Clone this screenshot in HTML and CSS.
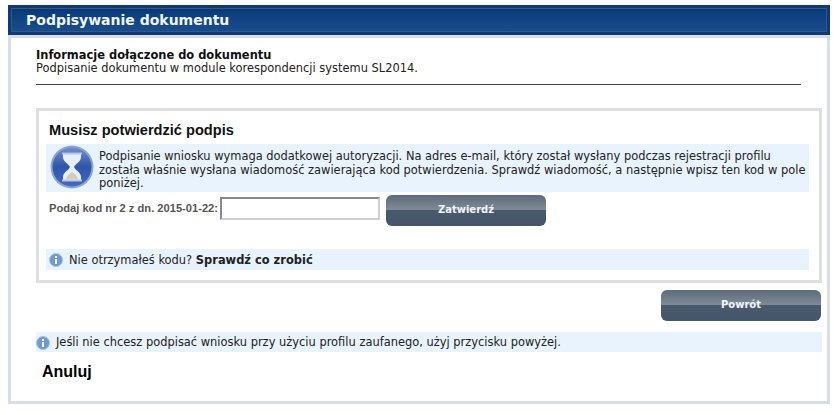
FILE: index.html
```html
<!DOCTYPE html>
<html lang="pl">
<head>
  <meta charset="UTF-8" />
  <title>Podpisywanie dokumentu</title>
  <link rel="stylesheet" href="styles.css">
</head>
<body>
  <header class="naglowek">
    <h1>Podpisywanie dokumentu</h1>
  </header>
  <main class="panel">
    <section class="informacje">
      <h2>Informacje dołączone do dokumentu</h2>
      <p>Podpisanie dokumentu w module korespondencji systemu SL2014.</p>
    </section>

    <section class="potwierdzenie">
      <h3>Musisz potwierdzić podpis</h3>
      <div class="komunikat">
        <svg class="klepsydra" viewBox="0 0 44 44" aria-hidden="true">
          <defs>
            <linearGradient id="tlo" x1="0" y1="0" x2="0" y2="1">
              <stop offset="0" stop-color="#6f8fd0"/>
              <stop offset="0.5" stop-color="#2f55a8"/>
              <stop offset="1" stop-color="#3f6cc0"/>
            </linearGradient>
          </defs>
          <circle cx="22" cy="22" r="21.5" fill="#8fa5cf"/>
          <circle cx="22" cy="22" r="19.5" fill="url(#tlo)"/>
          <path d="M13 9h18v3c0 5-6 7-7 10 1 3 7 5 7 10v3H13v-3c0-5 6-7 7-10-1-3-7-5-7-10z" fill="#e8eef8"/>
          <path d="M16 34c1-4 4-6 6-7 2 1 5 3 6 7z" fill="#d6cdb8"/>
          <path d="M12 8.500h20M12 35.500h20" stroke="#b9c6de" stroke-width="2"/>
        </svg>
        <p>Podpisanie wniosku wymaga dodatkowej autoryzacji. Na adres e-mail, który został wysłany podczas rejestracji profilu została właśnie wysłana wiadomość zawierająca kod potwierdzenia. Sprawdź wiadomość, a następnie wpisz ten kod w pole poniżej.</p>
      </div>
      <form class="kod">
        <label for="kod">Podaj kod nr 2 z dn. 2015-01-22:</label>
        <input type="text" id="kod">
        <button type="button" class="przycisk">Zatwierdź</button>
      </form>
      <div class="pomoc">
        <svg class="ikona-info" viewBox="0 0 14 14" aria-hidden="true">
          <circle cx="7" cy="7" r="6.500" fill="#6f9ad0" stroke="#a9c0dc"/>
          <rect x="6" y="6" width="2" height="5" fill="#fff"/>
          <rect x="6" y="3" width="2" height="2" fill="#fff"/>
        </svg>
        <p>Nie otrzymałeś kodu? <strong>Sprawdź co zrobić</strong></p>
      </div>
    </section>

    <div class="akcje">
      <button type="button" class="przycisk">Powrót</button>
    </div>

    <div class="pomoc pomoc-dolna">
      <svg class="ikona-info" viewBox="0 0 14 14" aria-hidden="true">
        <circle cx="7" cy="7" r="6.500" fill="#6f9ad0" stroke="#a9c0dc"/>
        <rect x="6" y="6" width="2" height="5" fill="#fff"/>
        <rect x="6" y="3" width="2" height="2" fill="#fff"/>
      </svg>
      <p>Jeśli nie chcesz podpisać wniosku przy użyciu profilu zaufanego, użyj przycisku powyżej.</p>
    </div>

    <a class="anuluj" href="#">Anuluj</a>
  </main>
</body>
</html>
```

FILE: styles.css
```css
:root {
  --ramka: #d9dee6;
  --ramka-jasna: #dfdfdf;
  --blekit: #e9f3fd;
  --tekst: #222;
}

* {
  box-sizing: border-box;
  margin: 0;
  padding: 0;
}

body {
  background-color: #fff;
  color: var(--tekst);
  font-family: "DejaVu Sans", Verdana, sans-serif;
  font-size: 11.450px;
  line-height: 13px;
  padding: 5px 4px 0 8px;
}

.naglowek {
  height: 30px;
  padding: 7px 18px 0;
  background: linear-gradient(#0d2f5e, #0c3f80 30%, #1f4f8c);
  box-shadow: inset 0 0 0 3px #123a70, inset 0 0 0 4px #2b5a94;
}

.naglowek h1 {
  color: #f2f6fb;
  font-size: 14px;
  line-height: 16px;
  font-weight: bold;
}

.panel {
  height: 369px;
  padding: 11px 5px 0 25px;
  border: 3px solid var(--ramka);
}

.informacje {
  margin-right: 21px;
  height: 36px;
  border-bottom: 1px solid #444;
}

.informacje h2 {
  font-size: 11.450px;
  line-height: 13px;
  color: #111;
}

.potwierdzenie {
  margin-top: 23px;
  height: 175px;
  padding: 10px 10px 0 10px;
  border: 3px solid var(--ramka-jasna);
}

.potwierdzenie h3 {
  color: #111;
  font-family: "Liberation Sans", Arial, sans-serif;
  font-size: 14.600px;
  line-height: 18px;
  margin-bottom: 5px;
}

.komunikat {
  display: flex;
  gap: 5px;
  height: 48px;
  margin-left: -3px;
  background-color: var(--blekit);
  padding: 1px 0 0 4px;
}

.komunikat p {
  padding-top: 5px;
  line-height: 13.500px;
}

.klepsydra {
  flex: none;
  width: 44px;
  height: 44px;
}

.kod {
  display: flex;
  align-items: flex-start;
  margin-top: 3px;
  height: 31px;
}

.kod label {
  flex: none;
  width: 170px;
  padding-top: 7px;
  font-family: "Liberation Sans", Arial, sans-serif;
  font-size: 11.150px;
  font-weight: bold;
  color: #555;
  white-space: nowrap;
}

.kod input {
  width: 160px;
  height: 23px;
  margin: 2px 6px 0 1px;
  border: 2px solid;
  border-color: #8a8a8a #d0d0d0 #d0d0d0 #8a8a8a;
  background-color: #fff;
}

.przycisk {
  width: 160px;
  height: 31px;
  border: 0;
  border-radius: 6px;
  padding-bottom: 2px;
  color: #f2f4f6;
  font-family: "DejaVu Sans", Verdana, sans-serif;
  font-size: 10px;
  font-weight: bold;
  background: linear-gradient(#5d6b7a, #7e8a97 48%, #4a5a6c 50%, #45556a);
}

.pomoc {
  display: flex;
  align-items: center;
  gap: 6px;
  height: 21px;
  margin: 23px 0 0 -3px;
  padding: 1px 0 0 3px;
  background-color: var(--blekit);
}

.ikona-info {
  flex: none;
  width: 14px;
  height: 14px;
}

.akcje {
  display: flex;
  justify-content: flex-end;
  margin: 7px 1px 0 0;
}

.pomoc-dolna {
  margin: 11px 0 0;
  height: 20px;
  padding-left: 0;
}

.anuluj {
  display: block;
  margin: 11px 0 0 6px;
  color: #000;
  font-family: "Liberation Sans", Arial, sans-serif;
  font-size: 16px;
  line-height: 18px;
  font-weight: bold;
  text-decoration: none;
}
```
